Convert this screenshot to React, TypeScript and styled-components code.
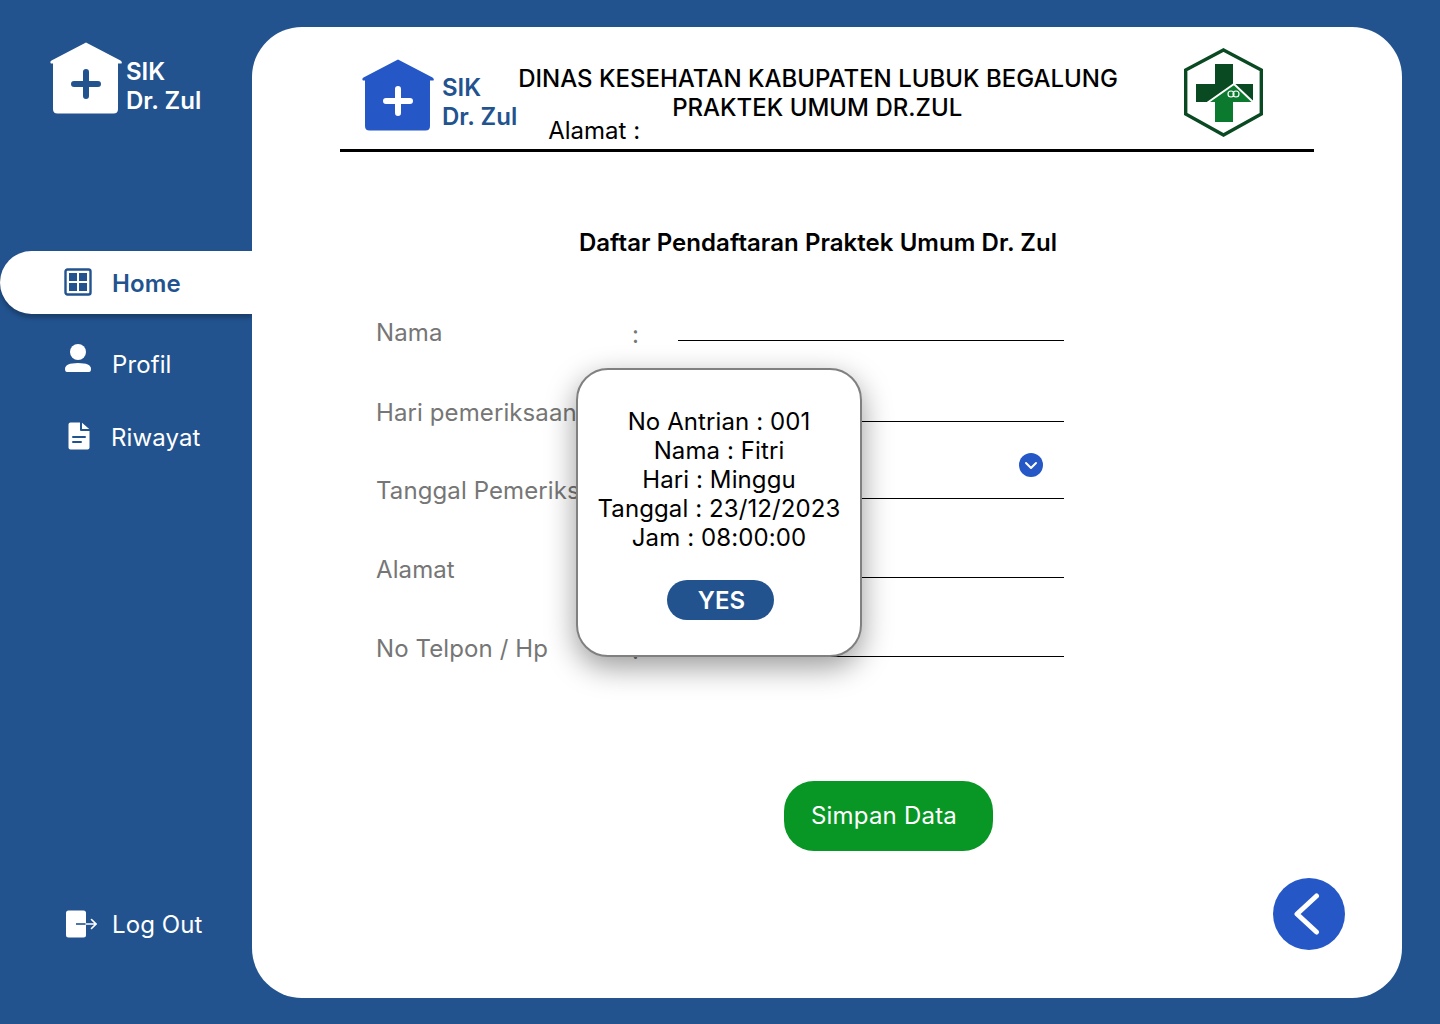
import styled, { createGlobalStyle } from 'styled-components';

const GlobalStyle = createGlobalStyle`
  html, body {
    margin: 0;
    padding: 0;
    background-color: #22538f;
  }
  * {
    box-sizing: border-box;
  }
  body {
    font-family: 'Inter', 'Noto Sans', sans-serif;
  }
`;

const Page = styled.div`
  width: 1440px;
  height: 1024px;
  display: flex;
  overflow: hidden;
  background-color: #22538f;
`;

const Sidebar = styled.aside`
  width: 252px;
  height: 1024px;
  flex-shrink: 0;
  display: flex;
  flex-direction: column;
  padding: 42px 0 86px;
`;

const Brand = styled.div<{ $color: string; $gap: number }>`
  display: flex;
  align-items: flex-start;
  gap: ${(props) => props.$gap}px;
  color: ${(props) => props.$color};
`;

const SidebarBrand = styled.div`
  padding-left: 50px;
  height: 209px;
`;

const BrandText = styled.div`
  margin-top: 15px;
  font-size: 24px;
  line-height: 29px;
  font-weight: 600;
  white-space: nowrap;
`;

const Nav = styled.nav`
  display: flex;
  flex-direction: column;
`;

const NavItem = styled.div<{ $active?: boolean; $height: number; $left: number; $gap: number }>`
  height: ${(props) => props.$height}px;
  display: flex;
  align-items: center;
  gap: ${(props) => props.$gap}px;
  padding-left: ${(props) => props.$left}px;
  font-size: 24px;
  letter-spacing: 0.1px;
  font-weight: ${(props) => (props.$active ? 600 : 400)};
  color: ${(props) => (props.$active ? '#22538f' : '#ffffff')};
  background-color: ${(props) => (props.$active ? '#ffffff' : 'transparent')};
  border-radius: ${(props) => (props.$active ? '32px 0 0 32px' : '0')};
  box-shadow: ${(props) => (props.$active ? '0 4px 4px rgba(0, 0, 0, 0.25)' : 'none')};
`;

const NavIcon = styled.span<{ $shift?: number }>`
  display: flex;
  margin-top: ${(props) => props.$shift ?? 0}px;
`;

const NavLabel = styled.span<{ $shift?: number }>`
  margin-top: ${(props) => props.$shift ?? 0}px;
`;

const LogoutItem = styled(NavItem)`
  margin-top: auto;
`;

const Panel = styled.main`
  position: relative;
  width: 1150px;
  height: 971px;
  margin-top: 27px;
  background-color: #ffffff;
  border-radius: 50px;
  display: flex;
  flex-direction: column;
  padding: 20px 88px 0;
`;

const Header = styled.header`
  width: 974px;
  height: 105px;
  flex-shrink: 0;
  border-bottom: 3px solid #000000;
  display: flex;
  align-items: flex-start;
  padding: 12px 0 0 22px;
  color: #000000;
`;

const HeaderCenter = styled.div`
  width: 598px;
  margin-left: 1px;
  margin-top: 5px;
  flex-shrink: 0;
  font-size: 24px;
  line-height: 29px;
`;

const HeaderTitle = styled.div`
  font-weight: 500;
  text-align: center;
  white-space: nowrap;
`;

const HeaderAddress = styled.div`
  margin-top: -6px;
  padding-left: 30px;
`;

const HeaderBrandText = styled(BrandText)`
  margin-top: 14px;
`;

const Emblem = styled.svg`
  margin-left: 64px;
  margin-top: -15px;
  flex-shrink: 0;
`;

const FormTitle = styled.h1`
  width: 956px;
  margin: 76px 0 0;
  text-align: center;
  font-size: 24px;
  line-height: 29px;
  font-weight: 600;
  letter-spacing: 0.05px;
  color: #000000;
`;

const Form = styled.div`
  margin-top: 3px;
  padding-left: 36px;
  display: flex;
  flex-direction: column;
`;

const Row = styled.div<{ $height: number }>`
  height: ${(props) => props.$height}px;
  display: grid;
  grid-template-columns: 256px 46px 386px;
  align-items: end;
  font-size: 24px;
  line-height: 29px;
  letter-spacing: 0.1px;
  color: #767676;
`;

const Label = styled.div<{ $drop: number }>`
  margin-bottom: -${(props) => props.$drop}px;
  white-space: nowrap;
`;

const Colon = styled.div`
  margin-bottom: -8px;
`;

const Field = styled.div`
  height: 100%;
  border-bottom: 1px solid #000000;
  display: flex;
  align-items: flex-end;
  justify-content: flex-end;
  padding: 0 21px 21px 0;
`;

const SaveButton = styled.button`
  width: 209px;
  height: 70px;
  margin: 124px 0 0 444px;
  padding: 0 9px 2px 0;
  border: 0;
  border-radius: 30px;
  background-color: #089725;
  color: #ffffff;
  font-family: inherit;
  font-size: 24px;
  letter-spacing: 0.2px;
`;

const BackButton = styled.button`
  width: 72px;
  height: 72px;
  margin: 27px -31px 0 0;
  padding: 0;
  align-self: flex-end;
  border: 0;
  border-radius: 50%;
  background-color: #2557c7;
  display: flex;
  align-items: center;
  justify-content: center;
`;

const Modal = styled.div`
  position: absolute;
  left: 324px;
  top: 341px;
  width: 286px;
  height: 289px;
  padding-top: 37px;
  background-color: #ffffff;
  border: 2px solid #808080;
  border-radius: 32px;
  box-shadow: 0 10px 30px rgba(0, 0, 0, 0.4);
  display: flex;
  flex-direction: column;
  align-items: center;
`;

const ModalText = styled.div`
  font-size: 24px;
  line-height: 29px;
  letter-spacing: 0.1px;
  color: #000000;
  text-align: center;
  white-space: nowrap;
`;

const YesButton = styled.button`
  width: 107px;
  height: 40px;
  margin: 28px 0 0 3px;
  padding: 0 0 0 2px;
  border: 0;
  border-radius: 20px;
  background-color: #22538f;
  color: #ffffff;
  font-family: inherit;
  font-size: 24px;
  font-weight: 600;
`;

const HouseLogo = ({ fill, cross }: { fill: string; cross: string }) => (
  <svg width="72" height="72" viewBox="0 0 72 72">
    <path
      d="M36 0.5 L70.5 18.5 Q72.5 20 71.5 21.5 L68 21.5 L68 67 Q68 71.5 63.5 71.5 L7.5 71.5 Q3 71.5 3 67 L3 21.5 L1 21.5 Q-0.5 20 1.5 18.5 Z"
      fill={fill}
    />
    <path d="M36 30 V54 M24 42 H48" stroke={cross} strokeWidth="6" strokeLinecap="round" />
  </svg>
);

const GridIcon = () => (
  <svg width="28" height="28" viewBox="0 0 28 28">
    <rect x="1.5" y="1.5" width="25" height="25" rx="2" fill="none" stroke="#22538f" strokeWidth="2.4" />
    <rect x="5" y="5" width="8" height="8" fill="#22538f" />
    <rect x="15" y="5" width="8" height="8" fill="#22538f" />
    <rect x="5" y="15" width="8" height="8" fill="#22538f" />
    <rect x="15" y="15" width="8" height="8" fill="#22538f" />
  </svg>
);

const UserIcon = () => (
  <svg width="28" height="30" viewBox="0 0 28 30">
    <circle cx="14" cy="9" r="8" fill="#ffffff" />
    <path d="M1 26 Q1 20 14 20 Q27 20 27 26 Q27 29 25 29 H3 Q1 29 1 26 Z" fill="#ffffff" />
  </svg>
);

const FileIcon = () => (
  <svg width="22" height="28" viewBox="0 0 22 28">
    <path d="M2.5 0.5 H12 V8 Q12 9 13 9 H21.5 V25.5 Q21.5 27.5 19.5 27.5 H2.5 Q0.5 27.5 0.5 25.5 V2.5 Q0.5 0.5 2.5 0.5 Z" fill="#ffffff" />
    <path d="M14 0.8 L21.2 7 H14 Z" fill="#ffffff" />
    <path d="M5 15 H17 M5 20 H13" stroke="#22538f" strokeWidth="2" strokeLinecap="round" />
  </svg>
);

const LogoutIcon = () => (
  <svg width="31" height="28" viewBox="0 0 31 28">
    <rect x="0" y="0.5" width="20" height="27" rx="2.5" fill="#ffffff" />
    <path d="M10 14 H20" stroke="#22538f" strokeWidth="1.6" />
    <path d="M20 14 H30 M25.5 9.5 L30 14 L25.5 18.5" stroke="#ffffff" strokeWidth="1.6" fill="none" strokeLinecap="round" />
  </svg>
);

const EmblemIcon = () => (
  <Emblem width="88" height="98" viewBox="0 0 88 98">
    <path d="M43.5 6 L81.3 26 V70 L43.5 91 L5.7 70 V26 Z" fill="#ffffff" stroke="#0a4a22" strokeWidth="3.4" />
    <path d="M35 20 H53 V40 H73 V58 H53 V78 H35 V58 H16 V40 H35 Z" fill="#0a4a22" />
    <path d="M54 40 L73 58 H53 V78 H35 V58 H29 Z" fill="#0b7a2e" />
    <path d="M27 59 L54 40 L73 58" fill="none" stroke="#ffffff" strokeWidth="2" />
    <circle cx="51" cy="50" r="3" fill="none" stroke="#ffffff" strokeWidth="1.2" />
    <circle cx="56" cy="50" r="3" fill="none" stroke="#ffffff" strokeWidth="1.2" />
  </Emblem>
);

const rows = [
  { label: 'Nama', height: 81, drop: 6 },
  { label: 'Hari pemeriksaan', height: 81, drop: 5 },
  { label: 'Tanggal Pemeriksaan', height: 77, drop: 6, dropdown: true },
  { label: 'Alamat', height: 79, drop: 6 },
  { label: 'No Telpon / Hp', height: 79, drop: 6 },
];

const App = () => {
  return (
    <Page>
      <GlobalStyle />
      <Sidebar>
        <SidebarBrand>
          <Brand $color="#ffffff" $gap={4}>
            <HouseLogo fill="#ffffff" cross="#22538f" />
            <BrandText>
              SIK
              <br />
              Dr. Zul
            </BrandText>
          </Brand>
        </SidebarBrand>
        <Nav>
          <NavItem $active $height={63} $left={64} $gap={20}>
            <NavIcon $shift={-2}>
              <GridIcon />
            </NavIcon>
            <NavLabel $shift={2}>Home</NavLabel>
          </NavItem>
          <NavItem $height={87} $left={64} $gap={20}>
            <NavIcon>
              <UserIcon />
            </NavIcon>
            <NavLabel $shift={13}>Profil</NavLabel>
          </NavItem>
          <NavItem $height={69} $left={68} $gap={21}>
            <NavIcon>
              <FileIcon />
            </NavIcon>
            <NavLabel $shift={3}>Riwayat</NavLabel>
          </NavItem>
        </Nav>
        <LogoutItem $height={28} $left={66} $gap={15}>
          <NavIcon>
            <LogoutIcon />
          </NavIcon>
          <NavLabel>Log Out</NavLabel>
        </LogoutItem>
      </Sidebar>
      <Panel>
        <Header>
          <Brand $color="#22538f" $gap={8}>
            <HouseLogo fill="#2557c7" cross="#ffffff" />
            <HeaderBrandText>
              SIK
              <br />
              Dr. Zul
            </HeaderBrandText>
          </Brand>
          <HeaderCenter>
            <HeaderTitle>DINAS KESEHATAN KABUPATEN LUBUK BEGALUNG</HeaderTitle>
            <HeaderTitle>PRAKTEK UMUM DR.ZUL</HeaderTitle>
            <HeaderAddress>Alamat :</HeaderAddress>
          </HeaderCenter>
          <EmblemIcon />
        </Header>
        <FormTitle>Daftar Pendaftaran Praktek Umum Dr. Zul</FormTitle>
        <Form>
          {rows.map((row) => (
            <Row key={row.label} $height={row.height}>
              <Label $drop={row.drop}>{row.label}</Label>
              <Colon>:</Colon>
              <Field>
                {row.dropdown && (
                  <svg width="24" height="24" viewBox="0 0 24 24">
                    <circle cx="12" cy="12" r="12" fill="#2557c7" />
                    <path d="M7 10 L12 15 L17 10" fill="none" stroke="#ffffff" strokeWidth="2" strokeLinecap="round" strokeLinejoin="round" />
                  </svg>
                )}
              </Field>
            </Row>
          ))}
        </Form>
        <SaveButton>Simpan Data</SaveButton>
        <BackButton aria-label="Kembali">
          <svg width="30" height="46" viewBox="0 0 30 46">
            <path d="M22.5 5 L3 23 L22.5 41" fill="none" stroke="#ffffff" strokeWidth="5" strokeLinecap="round" strokeLinejoin="round" />
          </svg>
        </BackButton>
        <Modal>
          <ModalText>
            No Antrian : 001
            <br />
            Nama : Fitri
            <br />
            Hari : Minggu
            <br />
            Tanggal : 23/12/2023
            <br />
            Jam : 08:00:00
          </ModalText>
          <YesButton>YES</YesButton>
        </Modal>
      </Panel>
    </Page>
  );
};

export default App;
